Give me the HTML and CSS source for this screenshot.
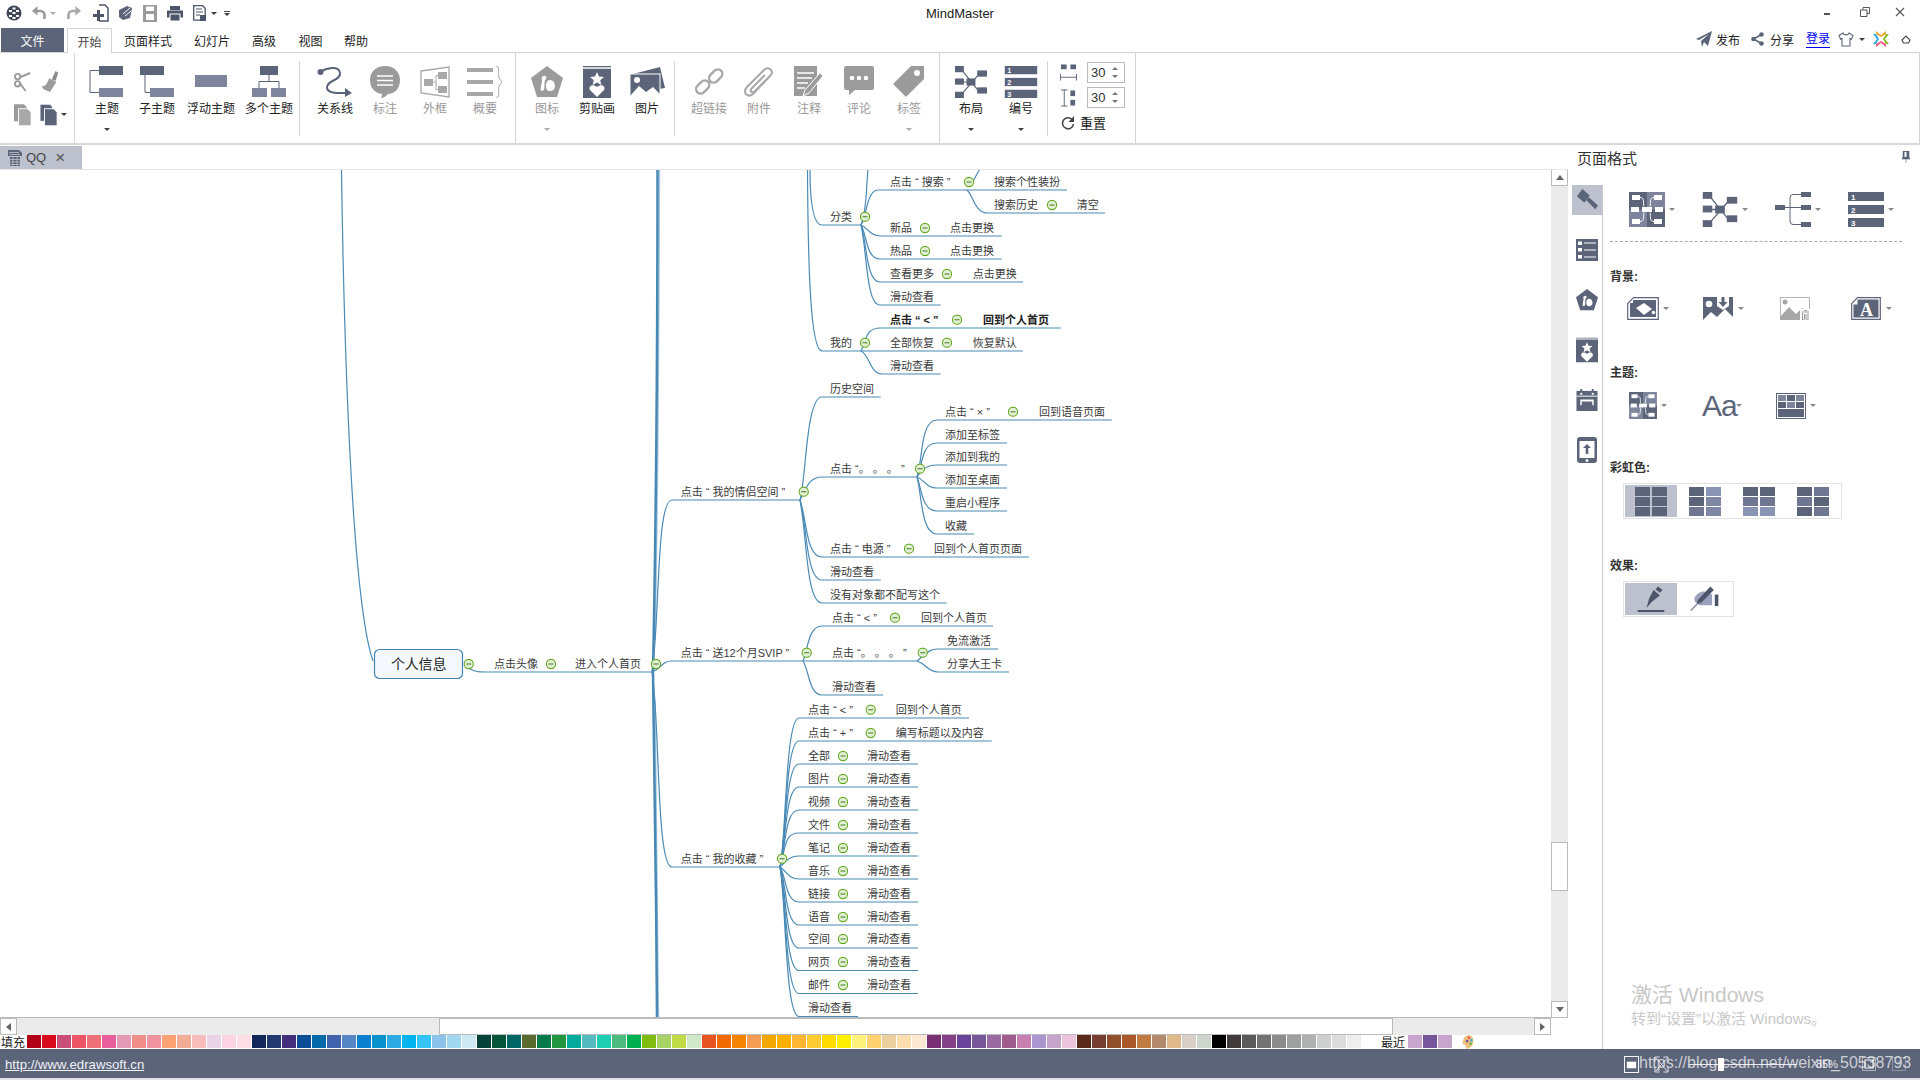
FILE: index.html
```html
<!DOCTYPE html>
<html lang="zh-CN">
<head>
<meta charset="utf-8">
<title>MindMaster</title>
<link rel="stylesheet" href="styles.css">
</head>
<body>
<svg class="defs" width="0" height="0">
  <symbol id="m" viewBox="0 0 11 11"><circle cx="5.5" cy="5.5" r="4.6" fill="#e3eed6" stroke="#62a81c" stroke-width="1.1"/><path d="M3 5.500H8" stroke="#3f7f16" stroke-width="1.1"/></symbol>
  <symbol id="i-clip" viewBox="0 0 28 32"><path d="M0 0H28V32H0Z" fill="#5c6479"/><path d="M0 2H28" stroke="#fff" stroke-width="1.5"/><path d="M14 6l2 4.600 5 .4-3.800 3.200 1.200 4.800-4.400-2.600-4.400 2.600 1.200-4.800L7 11l5-.4Z" fill="#fff"/><path d="M14 31l-7-7c-2-3 2-7 7-3 5-4 9 0 7 3Z" fill="#fff"/></symbol>
  <symbol id="i-penta" viewBox="0 0 32 32"><path d="M16 0L32 12 26 31H6L0 12Z" fill="currentColor"/><path d="M13 10c3-1 3 3 1 4-1 3 0 6-1 10l-3 1c-1-4 1-7 1-11-1-2 0-4 2-4ZM19 14c3 0 5 3 5 6 0 3-2 5-5 5-3 0-4-2-4-5 0-3 1-6 4-6Z" fill="#fff"/></symbol>
  <symbol id="i-layout" viewBox="0 0 36 36"><g fill="#5c6479"><rect x="0" y="0" width="10" height="7"/><rect x="0" y="14" width="10" height="7"/><rect x="0" y="29" width="10" height="7"/><rect x="25" y="5" width="11" height="7"/><rect x="25" y="24" width="11" height="7"/><rect x="13" y="14" width="10" height="8"/></g><path d="M8 5L28 30M8 31L28 8M8 18H16" stroke="#5c6479" stroke-width="1.300" fill="none"/></symbol>
  <symbol id="i-bars" viewBox="0 0 36 35"><g fill="#5c6479"><rect width="36" height="9"/><rect y="13" width="36" height="9"/><rect y="26" width="36" height="9"/></g></symbol>
  <symbol id="i-themap" viewBox="0 0 36 35"><rect width="36" height="35" fill="#7e849c"/><path d="M0 0H18V17.500H36V35H18V17.500H0Z" fill="#5c6479"/><g fill="#fff"><rect x="3" y="3" width="8" height="5"/><rect x="25" y="3" width="8" height="5"/><rect x="2" y="15" width="8" height="5"/><rect x="26" y="15" width="8" height="5"/><rect x="3" y="27" width="8" height="5"/><rect x="25" y="27" width="8" height="5"/><rect x="13" y="15" width="10" height="5"/></g><path d="M11 5.500c5 0 3 6 4 9M25 5.500c-5 0-3 6-4 9M11 29.500c5 0 3-6 4-9M25 29.500c-5 0-3-6-4-9" stroke="#fff" fill="none"/></symbol>
  <symbol id="i-pen" viewBox="0 0 36 30"><path d="M26 1l5 4-3 3-5-4ZM21 5l7 6-9 7-6 7 3-11Z" fill="#4d556b"/><path d="M3 28.500H33" stroke="#4d556b" stroke-width="2"/></symbol>
</svg>

<div class="app">
  <header class="titlebar">
    <div class="qa">
      <svg class="q q-logo" viewBox="0 0 16 16"><circle cx="8" cy="8" r="7.500" fill="#3f4658"/><path d="M3 5h3v2H3zM10 5h3v2h-3zM6.500 2.500h3v2h-3zM6.500 7h3v2h-3zM3 10h3v2H3zM10 10h3v2h-3zM6.500 12h3v2h-3z" fill="#fff"/></svg>
      <svg class="q q-undo" viewBox="0 0 14 14"><path d="M4 5H8.500A4 4 0 0 1 12.500 9V13" fill="none" stroke="#9b9b9b" stroke-width="2.600"/><path d="M5.500 0V9.500L0 5Z" fill="#9b9b9b"/></svg>
      <i class="caret c-light q-c1"></i>
      <svg class="q q-redo" viewBox="0 0 14 14"><path d="M10 5H5.500A4 4 0 0 0 1.500 9V13" fill="none" stroke="#a8a8a8" stroke-width="2.600"/><path d="M8.500 0V9.500L14 5Z" fill="#a8a8a8"/></svg>
      <svg class="q q-new" viewBox="0 0 16 18"><path d="M6 1h6l3 3v13H6" fill="none" stroke="#4d556b" stroke-width="1.500"/><path d="M0 10h4V6h3v4h4v3H7v4H4v-4H0Z" fill="#4d556b"/></svg>
      <svg class="q q-open" viewBox="0 0 16 16"><path d="M1 5l8-4 5 2-2 10-7 2-4-3Z" fill="#5c6479"/><path d="M5 9l7-6M7 11l6-5" stroke="#fff"/></svg>
      <svg class="q q-save" viewBox="0 0 14 17"><rect width="14" height="17" fill="#9b9b9b"/><rect x="3" y="1.500" width="8" height="4.500" fill="#fff"/><rect x="3" y="9" width="8" height="6" fill="#fff"/></svg>
      <svg class="q q-print" viewBox="0 0 16 15"><rect x="3" y="0" width="10" height="4" fill="#4d556b"/><rect y="4.500" width="16" height="7" fill="#4d556b"/><rect x="3" y="8" width="10" height="7" fill="#4d556b" stroke="#fff"/></svg>
      <svg class="q q-page" viewBox="0 0 13 16"><path d="M.7.700h9l2.500 2.500v12H.7Z" fill="none" stroke="#4d556b" stroke-width="1.300"/><path d="M3 4h6M3 7h7M3 10h4" stroke="#4d556b"/><rect x="7" y="10" width="6" height="6" fill="#4d556b"/></svg>
      <i class="caret q-c2"></i>
      <span class="q-more"><i class="bar"></i><i class="caret"></i></span>
    </div>
    <div class="apptitle">MindMaster</div>
    <div class="winctl">
      <span class="wc-min"></span>
      <svg class="wc-res" viewBox="0 0 10 10"><path d="M3 2.500V.5H9.500V6.500H7M.5 3H7V9.500H.5Z" fill="none" stroke="#555"/></svg>
      <svg class="wc-cl" viewBox="0 0 10 10"><path d="M1 1L9 9M9 1L1 9" stroke="#555" stroke-width="1.100"/></svg>
    </div>
  </header>

  <nav class="tabs">
    <div class="tab tab-file">文件</div>
    <div class="tab tab-active">开始</div>
    <div class="tab w72">页面样式</div>
    <div class="tab w56">幻灯片</div>
    <div class="tab w48">高级</div>
    <div class="tab w45">视图</div>
    <div class="tab w46">帮助</div>
    <div class="topright">
      <svg class="tr-send" viewBox="0 0 16 16"><path d="M0 8L16 0 12 15 8 11 6 16 5 10 13 3 3 9Z" fill="#5c6479"/></svg>
      <span class="tr-t1">发布</span>
      <svg class="tr-share" viewBox="0 0 13 14"><path d="M10.500 2.500L2.500 7l8 4.500" fill="none" stroke="#5c6479" stroke-width="1.500"/><circle cx="10.500" cy="2.500" r="2.300" fill="#5c6479"/><circle cx="2.500" cy="7" r="2.300" fill="#5c6479"/><circle cx="10.500" cy="11.500" r="2.300" fill="#5c6479"/></svg>
      <span class="tr-t2">分享</span>
      <span class="tr-login">登录</span>
      <svg class="tr-shirt" viewBox="0 0 16 15"><path d="M5 1L1 3.500 2.500 7 4 6.500V14H12V6.500L13.500 7 15 3.500 11 1C10 3.500 6 3.500 5 1Z" fill="none" stroke="#5c6479" stroke-width="1.100"/></svg>
      <i class="caret tr-caret"></i>
      <svg class="tr-logo" viewBox="0 0 16 16"><path d="M0 3l4 5-4 5h3l3-5-3-5Z" fill="#35a9e0"/><path d="M13 0L8 4 3 0v3l5 3 5-3Z" fill="#f3a935"/><path d="M16 3l-4 5 4 5h-3l-3-5 3-5Z" fill="#8dbb2c"/><path d="M3 16l5-4 5 4v-3L8 10l-5 3Z" fill="#ef5b7d"/></svg>
      <svg class="tr-up" viewBox="0 0 10 9"><path d="M1 5L5 1 9 5 7.500 8H2.500Z" fill="none" stroke="#444" stroke-width="1.100"/></svg>
    </div>
  </nav>

  <section class="ribbon">
    <div class="grp g-clip">
      <svg class="cb" viewBox="0 0 20 22"><circle cx="4" cy="5" r="3" fill="none" stroke="#9b9b9b" stroke-width="2"/><circle cx="4" cy="13" r="3" fill="none" stroke="#9b9b9b" stroke-width="2"/><path d="M6 6L18 1M6 12L13 21" stroke="#9b9b9b" stroke-width="2.200"/></svg>
      <svg class="cb" viewBox="0 0 18 24"><path d="M11 9L15 0l3 2-3 9Z" fill="#8a8a8a"/><path d="M8 8l8 4-7 11-7-3-2-3c4 0 6-3 8-9Z" fill="#9b9b9b"/></svg>
      <svg class="cb" viewBox="0 0 20 24"><path d="M0 0H11L14 3V19H0Z" fill="#9b9b9b"/><path d="M5 5H15L19 9V24H5Z" fill="#a8a8a8" stroke="#fff"/></svg>
      <span class="paste"><svg class="cb" viewBox="0 0 20 24"><path d="M0 0H11L14 3V19H0Z" fill="#5c6479" stroke="#fff"/><path d="M5 5H15L19 9V24H5Z" fill="#5c6479" stroke="#fff"/></svg><i class="caret"></i></span>
    </div>
    <div class="grp g2">
      <div class="rb w50"><svg class="ri" viewBox="0 0 36 32"><rect x="10" width="24" height="9" fill="#5c6479"/><rect x="10" y="22" width="24" height="9" fill="#7e849c"/><path d="M10 4.500H1V26.500H10" fill="none" stroke="#5c6479"/></svg><span>主题</span><i class="caret"></i></div>
      <div class="rb w50"><svg class="ri" viewBox="0 0 36 32"><rect x="1" width="24" height="9" fill="#5c6479"/><rect x="11" y="22" width="24" height="9" fill="#7e849c"/><path d="M6 9V26.500H11" fill="none" stroke="#5c6479"/></svg><span>子主题</span></div>
      <div class="rb w58"><svg class="ri" viewBox="0 0 36 32"><rect x="2" y="9" width="32" height="12" fill="#7e849c"/></svg><span>浮动主题</span></div>
      <div class="rb w58"><svg class="ri" viewBox="0 0 36 32"><rect x="9" width="18" height="9" fill="#5c6479"/><rect x="1" y="22" width="15" height="9" fill="#7e849c"/><rect x="20" y="22" width="15" height="9" fill="#7e849c"/><path d="M18 9V15.500M8 22V15.500H28V22" fill="none" stroke="#5c6479"/></svg><span>多个主题</span></div>
    </div>
    <div class="sep"></div>
    <div class="grp g3">
      <div class="rb w50"><svg class="ri" viewBox="0 0 36 32"><circle cx="3.500" cy="6" r="3" fill="#5c6479"/><path d="M3 6C9 2 22 -1 23 7C24 15 9 14 10 22C11 28 22 27 31 27" fill="none" stroke="#5c6479" stroke-width="2"/><path d="M28 22L35 27 28 31Z" fill="#5c6479"/></svg><span>关系线</span></div>
      <div class="rb w50 off"><svg class="ri" viewBox="0 0 32 32"><path d="M16 0C25 0 31 6 31 14 31 23 25 28 19 28 17 30 15 32 12 32 13 30 13 29 13 28 6 27 1 22 1 14 1 6 7 0 16 0Z" fill="#9b9b9b"/><path d="M8 10H24M8 14.500H24M8 19H24" stroke="#fff" stroke-width="1.300"/></svg><span>标注</span></div>
      <div class="rb w50 off"><svg class="ri" viewBox="0 0 30 32"><path d="M1 5L29 1V31L1 27Z" fill="none" stroke="#a8a8a8" stroke-width="1.300"/><g fill="#a8a8a8"><rect x="4" y="13" width="9" height="7"/><rect x="18" y="6" width="9" height="7"/><rect x="18" y="20" width="9" height="7"/></g><path d="M13 16H16V9.500H18M16 16V23.500H18" fill="none" stroke="#a8a8a8"/></svg><span>外框</span></div>
      <div class="rb w50 off"><svg class="ri" viewBox="0 0 36 32"><g fill="#a8a8a8"><rect y="2" width="26" height="4"/><rect y="14" width="26" height="4"/><rect y="26" width="26" height="4"/></g><path d="M29 0C33 0 31 6 32 12L35 16 32 20C31 26 33 32 29 32" fill="none" stroke="#a8a8a8"/></svg><span>概要</span></div>
    </div>
    <div class="sep sep-full"></div>
    <div class="grp g4">
      <div class="rb w50 off"><svg class="ri gray" viewBox="0 0 32 32"><use href="#i-penta"/></svg><span>图标</span><i class="caret c-light"></i></div>
      <div class="rb w50"><svg class="ri" viewBox="0 0 28 32"><use href="#i-clip"/></svg><span>剪贴画</span></div>
      <div class="rb w50"><svg class="ri" viewBox="0 0 36 32"><path d="M4 8L31 1 36 22 30 23V9H4Z" fill="#5c6479"/><rect x="1" y="8" width="30" height="23" fill="#5c6479" stroke="#fff"/><circle cx="8" cy="14" r="3" fill="#fff"/><path d="M1 30L10 20 17 26 24 21 31 28V31H1Z" fill="#fff"/></svg><span>图片</span></div>
    </div>
    <div class="sep"></div>
    <div class="grp g5">
      <div class="rb w50 off"><svg class="ri" viewBox="0 0 32 32"><g fill="none" stroke="#a8a8a8" stroke-width="2.400"><rect x="2" y="17" width="15" height="9" rx="4.500" transform="rotate(-45 9 21)"/><rect x="15" y="6" width="15" height="9" rx="4.500" transform="rotate(-45 22 10)"/></g></svg><span>超链接</span></div>
      <div class="rb w50 off"><svg class="ri" viewBox="0 0 32 32"><path d="M27 10L10 28C5 32-1 27 4 21L21 4C25 0 31 4 28 9L12 25C9 28 6 25 9 22L22 9" fill="none" stroke="#a8a8a8" stroke-width="2"/></svg><span>附件</span></div>
      <div class="rb w50 off"><svg class="ri" viewBox="0 0 30 32"><rect width="23" height="30" y="0" fill="#9b9b9b"/><path d="M3 7H20M3 12H18M3 17H14M3 22H11" stroke="#fff" stroke-width="1.500"/><path d="M26 7L29 10 15 27 9 30 11 24Z" fill="#9b9b9b" stroke="#fff"/></svg><span>注释</span></div>
      <div class="rb w50 off"><svg class="ri" viewBox="0 0 30 32"><path d="M2 0H28Q30 0 30 2V22Q30 24 28 24H11L5 29V24H2Q0 24 0 22V2Q0 0 2 0Z" fill="#9b9b9b"/><circle cx="8" cy="12" r="2.300" fill="#fff"/><circle cx="15" cy="12" r="2.300" fill="#fff"/><circle cx="22" cy="12" r="2.300" fill="#fff"/></svg><span>评论</span></div>
      <div class="rb w50 off"><svg class="ri" viewBox="0 0 32 32"><path d="M18 0H31V13L13 31 0 18Z" fill="#9b9b9b"/><circle cx="24" cy="7" r="3" fill="#fff"/></svg><span>标签</span><i class="caret c-light"></i></div>
    </div>
    <div class="sep sep-full"></div>
    <div class="grp g6">
      <div class="rb w50"><svg class="ri" viewBox="0 0 36 36"><use href="#i-layout"/></svg><span>布局</span><i class="caret"></i></div>
      <div class="rb w50"><svg class="ri" viewBox="0 0 36 35"><use href="#i-bars"/><g class="numtxt"><text x="3" y="8">1</text><text x="3" y="21">2</text><text x="3" y="34">3</text></g></svg><span>编号</span><i class="caret"></i></div>
    </div>
    <div class="sep"></div>
    <div class="grp g7">
      <div class="spinrow"><svg class="sp" viewBox="0 0 18 18"><rect x="1" y="0" width="6" height="5" fill="#5c6479"/><rect x="11" y="0" width="6" height="5" fill="#5c6479"/><path d="M.5 10V17M17.500 10V17M.5 13.500H17.500" stroke="#5c6479" fill="none"/></svg><div class="spin"><b>30</b><span class="arr"><i class="up"></i><i class="dn"></i></span></div></div>
      <div class="spinrow"><svg class="sp" viewBox="0 0 18 18"><rect x="11" y="1" width="5" height="6" fill="#5c6479"/><rect x="11" y="11" width="5" height="6" fill="#5c6479"/><path d="M1 .5H8M1 17.500H8M4.500 .5V17.500" stroke="#5c6479" fill="none"/></svg><div class="spin"><b>30</b><span class="arr"><i class="up"></i><i class="dn"></i></span></div></div>
      <div class="reset"><svg class="rst" viewBox="0 0 14 14"><path d="M11.500 4A5.500 5.500 0 1 0 12.500 8" fill="none" stroke="#444" stroke-width="1.500"/><path d="M13 0V6H7.500Z" fill="#444"/></svg><span>重置</span></div>
    </div>
    <div class="sep sep-full"></div>
  </section>

  <main class="main">
    <div class="left">
      <div class="doctabs">
        <div class="doctab">
          <svg class="docico" viewBox="0 0 16 18"><path d="M1 1H12L15 4V7H1Z" fill="#5c6479"/><rect x="3" y="8" width="10" height="9" fill="#5c6479"/><path d="M2 3.500H12M3 5.500H13M3 10.500H13M3 13H13M3 15.500H13M6 8V17M10 8V17" stroke="#bcc1cd" stroke-width=".8"/></svg>
          <span class="docname">QQ</span>
          <span class="docx">×</span>
        </div>
      </div>
      <div class="work">
        <div class="canvas">
          <svg class="map" width="1551" height="849" viewBox="0 169 1551 849">
            <g class="ln2">
              <path d="M659.500 169C659 300 658 500 655 640M655 700C657 800 658 900 658.500 1018"/>
            </g>
            <g class="ln3">
              <path d="M657.500 169C657.500 300 656.500 500 653 672"/>
              <path d="M653 672C654 760 656.500 900 657 1018"/>
            </g>
            <g class="ln">
              <path d="M341.500 169C344 350 352 600 373 661"/>
              <path d="M468 668C476 672 478 672 485 672H652"/>
              <path d="M652 672C660 620 656 500 672 500H800"/>
              <path d="M652 672C662 668 662 661 672 661H917"/>
              <path d="M652 672C660 720 656 867 672 867H780"/>

              <path d="M810 169C810 195 812 225 822 225H861"/>
              <path d="M807.500 169C808 260 810 351 822 351H1023"/>
              <path d="M861 225C867 210 866 190 868 169"/>
              <path d="M861 225C867 215 867 190 878 190H1067"/>
              <path d="M861 225C868 228 870 236 880 236H1001.700"/>
              <path d="M861 225C867 235 866 259 880 259H1001.700"/>
              <path d="M861 225C867 242 866 282 880 282H1023"/>
              <path d="M861 225C867 250 866 305 880 305H940.700"/>
              <path d="M970 187C974 180 976 175 980 169"/>
              <path d="M967 190C973 195 975 213 987 213H1105"/>
              <path d="M861 351C866 340 866 328 880 328H1060.700"/>
              <path d="M861 351C870 355 870 374 882 374H940.700"/>

              <path d="M800 500C806 480 806 397 822 397H880.700"/>
              <path d="M800 500C806 490 808 477 822 477H917"/>
              <path d="M800 500C807 520 806 557 822 557H1029"/>
              <path d="M800 500C807 525 806 580 822 580H880.700"/>
              <path d="M800 500C807 535 806 603 822 603H946.700"/>

              <path d="M917 477C923 460 920 420 937 420H1111.700"/>
              <path d="M917 477C923 465 921 443 937 443H1007"/>
              <path d="M917 477C922 470 926 465 937 465H1007"/>
              <path d="M917 477C925 480 926 488 937 488H1007"/>
              <path d="M917 477C922 490 922 511 937 511H1007"/>
              <path d="M917 477C922 495 921 534 937 534H974"/>

              <path d="M803 661C808 650 808 626 822 626H993"/>
              <path d="M803 661C809 670 809 695 822 695H883"/>
              <path d="M917 661C925 655 928 649 938 649H998"/>
              <path d="M917 661C925 663 928 672 938 672H1009"/>

              <path d="M780 867C786 845 785 718 799 718H969"/>
              <path d="M780 867C786 845 785 741 799 741H991.700"/>
              <path d="M780 867C786 845 785 764 799 764H918"/>
              <path d="M780 867C786 845 785 787 799 787H918"/>
              <path d="M780 867C786 845 785 810 799 810H918"/>
              <path d="M780 867C786 845 785 833 799 833H918"/>
              <path d="M780 867C786 862 788 856 799 856H918"/>
              <path d="M780 867C786 870 788 879 799 879H918"/>
              <path d="M780 867C786 875 785 902 799 902H918"/>
              <path d="M780 867C786 880 785 925 799 925H918"/>
              <path d="M780 867C786 885 785 948 799 948H918"/>
              <path d="M780 867C786 890 785 970.500 799 970.500H918"/>
              <path d="M780 867C786 895 785 993.500 799 993.500H918"/>
              <path d="M780 867C786 900 785 1016.500 799 1016.500H858"/>
            </g>

            <rect class="root" x="374.500" y="649.500" width="88" height="29" rx="5"/>
            <text class="roottxt" x="391" y="669">个人信息</text>

            <g class="t">
              <text x="494" y="667">点击头像</text><text x="575" y="667">进入个人首页</text>
              <text x="830" y="220">分类</text><text x="830" y="346">我的</text>
              <text x="890" y="185">点击 “ 搜索 ”</text><text x="994" y="185">搜索个性装扮</text>
              <text x="994" y="208">搜索历史</text><text x="1076.700" y="208">清空</text>
              <text x="890" y="231">新品</text><text x="950" y="231">点击更换</text>
              <text x="890" y="254">热品</text><text x="950" y="254">点击更换</text>
              <text x="890" y="277">查看更多</text><text x="972.700" y="277">点击更换</text>
              <text x="890" y="300">滑动查看</text>
              <text class="bold" x="890" y="323">点击 “ &lt; ”</text><text class="bold" x="983" y="323">回到个人首页</text>
              <text x="890" y="346">全部恢复</text><text x="972.700" y="346">恢复默认</text>
              <text x="890" y="369">滑动查看</text>
              <text x="830" y="392">历史空间</text>
              <text x="945" y="415">点击 “ × ”</text><text x="1039" y="415">回到语音页面</text>
              <text x="945" y="438">添加至标签</text><text x="945" y="460">添加到我的</text>
              <text x="945" y="483">添加至桌面</text><text x="945" y="506">重启小程序</text>
              <text x="945" y="529">收藏</text>
              <text x="830" y="472">点击 “。 。 。 ”</text>
              <text x="680.700" y="495">点击 “ 我的情侣空间 ”</text>
              <text x="830" y="552">点击 “ 电源 ”</text><text x="934" y="552">回到个人首页页面</text>
              <text x="830" y="575">滑动查看</text><text x="830" y="598">没有对象都不配写这个</text>
              <text x="832" y="621">点击 “ &lt; ”</text><text x="921" y="621">回到个人首页</text>
              <text x="832" y="656">点击 “。 。 。 ”</text>
              <text x="947" y="644">免流激活</text><text x="947" y="667">分享大王卡</text>
              <text x="832" y="690">滑动查看</text>
              <text x="680.700" y="656">点击 “ 送12个月SVIP ”</text>
              <text x="808" y="713">点击 “ &lt; ”</text><text x="895.700" y="713">回到个人首页</text>
              <text x="808" y="736">点击 “ + ”</text><text x="895.700" y="736">编写标题以及内容</text>
              <text x="680.700" y="862">点击 “ 我的收藏 ”</text>
              <text x="808" y="759">全部</text><text x="867" y="759">滑动查看</text>
              <text x="808" y="782">图片</text><text x="867" y="782">滑动查看</text>
              <text x="808" y="805">视频</text><text x="867" y="805">滑动查看</text>
              <text x="808" y="828">文件</text><text x="867" y="828">滑动查看</text>
              <text x="808" y="851">笔记</text><text x="867" y="851">滑动查看</text>
              <text x="808" y="874">音乐</text><text x="867" y="874">滑动查看</text>
              <text x="808" y="897">链接</text><text x="867" y="897">滑动查看</text>
              <text x="808" y="920">语音</text><text x="867" y="920">滑动查看</text>
              <text x="808" y="942">空间</text><text x="867" y="942">滑动查看</text>
              <text x="808" y="965">网页</text><text x="867" y="965">滑动查看</text>
              <text x="808" y="988">邮件</text><text x="867" y="988">滑动查看</text>
              <text x="808" y="1011">滑动查看</text>
            </g>

            <g class="mm">
              <use href="#m" x="463.200" y="658.500" width="11" height="11"/>
              <use href="#m" x="545.500" y="658.500" width="11" height="11"/>
              <use href="#m" x="650.500" y="658.500" width="11" height="11"/>
              <use href="#m" x="963.500" y="176.500" width="11" height="11"/>
              <use href="#m" x="1046.500" y="199.500" width="11" height="11"/>
              <use href="#m" x="919.500" y="222.500" width="11" height="11"/>
              <use href="#m" x="919.500" y="245.500" width="11" height="11"/>
              <use href="#m" x="941.500" y="268.500" width="11" height="11"/>
              <use href="#m" x="859.500" y="211.200" width="11" height="11"/>
              <use href="#m" x="951.500" y="314.200" width="11" height="11"/>
              <use href="#m" x="941.500" y="337.200" width="11" height="11"/>
              <use href="#m" x="859.500" y="337.200" width="11" height="11"/>
              <use href="#m" x="1007.500" y="406.200" width="11" height="11"/>
              <use href="#m" x="914.500" y="463.200" width="11" height="11"/>
              <use href="#m" x="798.200" y="486.200" width="11" height="11"/>
              <use href="#m" x="903.500" y="543.200" width="11" height="11"/>
              <use href="#m" x="889.500" y="612.200" width="11" height="11"/>
              <use href="#m" x="801.200" y="647.200" width="11" height="11"/>
              <use href="#m" x="917.200" y="647.200" width="11" height="11"/>
              <use href="#m" x="865.200" y="704.200" width="11" height="11"/>
              <use href="#m" x="865.200" y="727.500" width="11" height="11"/>
              <use href="#m" x="776.500" y="853.200" width="11" height="11"/>
              <use href="#m" x="837.500" y="750.500" width="11" height="11"/>
              <use href="#m" x="837.500" y="773.500" width="11" height="11"/>
              <use href="#m" x="837.500" y="796.500" width="11" height="11"/>
              <use href="#m" x="837.500" y="819.500" width="11" height="11"/>
              <use href="#m" x="837.500" y="842.500" width="11" height="11"/>
              <use href="#m" x="837.500" y="865.500" width="11" height="11"/>
              <use href="#m" x="837.500" y="888.500" width="11" height="11"/>
              <use href="#m" x="837.500" y="911.500" width="11" height="11"/>
              <use href="#m" x="837.500" y="933.500" width="11" height="11"/>
              <use href="#m" x="837.500" y="956.500" width="11" height="11"/>
              <use href="#m" x="837.500" y="979.500" width="11" height="11"/>
            </g>
          </svg>
        </div>
        <div class="vscroll">
          <div class="sbtn"><i class="tri tri-up"></i></div>
          <div class="vgap1"></div>
          <div class="vthumb"></div>
          <div class="vgap2"></div>
          <div class="sbtn"><i class="tri tri-dn"></i></div>
        </div>
      </div>
      <div class="hscroll">
        <div class="sbtn"><i class="tri tri-l"></i></div>
        <div class="hgap1"></div>
        <div class="hthumb"></div>
        <div class="hgap2"></div>
        <div class="sbtn"><i class="tri tri-r"></i></div>
      </div>
      <div class="colors">
        <span class="cl-label">填充</span>
        <div class="swatches">
          <i class="s1"></i><i class="s2"></i><i class="s3"></i><i class="s4"></i><i class="s5"></i><i class="s6"></i><i class="s7"></i><i class="s8"></i><i class="s9"></i><i class="s10"></i><i class="s11"></i><i class="s12"></i><i class="s13"></i><i class="s14"></i><i class="s15"></i>
          <i class="s16"></i><i class="s17"></i><i class="s18"></i><i class="s19"></i><i class="s20"></i><i class="s21"></i><i class="s22"></i><i class="s23"></i><i class="s24"></i><i class="s25"></i><i class="s26"></i><i class="s27"></i><i class="s28"></i><i class="s29"></i><i class="s30"></i>
          <i class="s31"></i><i class="s32"></i><i class="s33"></i><i class="s34"></i><i class="s35"></i><i class="s36"></i><i class="s37"></i><i class="s38"></i><i class="s39"></i><i class="s40"></i><i class="s41"></i><i class="s42"></i><i class="s43"></i><i class="s44"></i><i class="s45"></i>
          <i class="s46"></i><i class="s47"></i><i class="s48"></i><i class="s49"></i><i class="s50"></i><i class="s51"></i><i class="s52"></i><i class="s53"></i><i class="s54"></i><i class="s55"></i><i class="s56"></i><i class="s57"></i><i class="s58"></i><i class="s59"></i><i class="s60"></i>
          <i class="s61"></i><i class="s62"></i><i class="s63"></i><i class="s64"></i><i class="s65"></i><i class="s66"></i><i class="s67"></i><i class="s68"></i><i class="s69"></i><i class="s70"></i>
          <i class="s71"></i><i class="s72"></i><i class="s73"></i><i class="s74"></i><i class="s75"></i><i class="s76"></i><i class="s77"></i><i class="s78"></i><i class="s79"></i>
          <i class="s80"></i><i class="s81"></i><i class="s82"></i><i class="s83"></i><i class="s84"></i><i class="s85"></i><i class="s86"></i><i class="s87"></i><i class="s88"></i><i class="s89"></i><i class="s90"></i>
        </div>
        <span class="cl-recent">最近</span>
        <div class="recent"><i class="r1"></i><i class="r2"></i><i class="r1"></i></div>
        <svg class="palette" viewBox="0 0 14 16"><path d="M8 0C12 0 14 4 13 9 12 14 8 16 5 16 4 14 5 12 3 11 1 11 0 10 1 7 2 3 4 0 8 0Z" fill="#eec07c"/><circle cx="8" cy="3" r="1.500" fill="#e2564d"/><circle cx="11" cy="6" r="1.500" fill="#3ea7d9"/><circle cx="10" cy="10" r="1.500" fill="#5cb04a"/><circle cx="6" cy="7" r="1.500" fill="#7a57a3"/></svg>
      </div>
    </div>

    <aside class="panel">
      <div class="p-head"><span>页面格式</span><svg class="pin" viewBox="0 0 8 12"><path d="M1 0H7V7H1ZM0 7H8V8H0ZM4 8V12" fill="#5c6479" stroke="#5c6479" stroke-width=".6"/><rect x="2.500" y="1" width="2" height="5" fill="#fff"/></svg></div>
      <div class="p-body">
        <div class="strip">
          <div class="st st-on"><svg class="sti" viewBox="0 0 24 24"><path d="M1 8L7 0 15 7 9 15Z" fill="#5c6479"/><path d="M11 12L14 9 24 18 21 22Z" fill="#5c6479"/></svg></div>
          <div class="st"><svg class="sti" viewBox="0 0 22 22"><rect width="22" height="22" fill="#5c6479"/><path d="M2 2.500h4v3.500H2zM2 9h4v3.500H2zM2 16h4v3.500H2z" fill="#fff"/><path d="M8 4H20M8 11H20M8 18H20" stroke="#fff"/></svg></div>
          <div class="st"><svg class="sti" viewBox="0 0 24 24"><use href="#i-penta" class="dark"/></svg></div>
          <div class="st"><svg class="sti tall" viewBox="0 0 28 32"><use href="#i-clip"/></svg></div>
          <div class="st"><svg class="sti" viewBox="0 0 22 23"><rect y="2" width="22" height="21" fill="#5c6479"/><path d="M5 0V3M17 0V3" stroke="#5c6479" stroke-width="2"/><circle cx="5" cy="5" r="1.200" fill="#fff"/><circle cx="17" cy="5" r="1.200" fill="#fff"/><path d="M0 7.500H22" stroke="#fff"/><path d="M4 11H18V17H16.500V13H5.500V17H4Z" fill="#fff"/></svg></div>
          <div class="st"><svg class="sti tall" viewBox="0 0 20 26"><rect width="20" height="26" rx="3" fill="#5c6479"/><rect x="2.500" y="4" width="15" height="17" fill="#fff"/><circle cx="10" cy="23.500" r="1.500" fill="#fff"/><path d="M10 7L14 11H11.300V17H8.700V11H6Z" fill="#5c6479"/></svg></div>
        </div>
        <div class="pf">
          <div class="row r1col">
            <div class="pi"><svg class="i36" viewBox="0 0 36 35"><use href="#i-themap"/></svg><i class="caret c-mid"></i></div>
            <div class="pi"><svg class="i36" viewBox="0 0 36 36"><use href="#i-layout"/></svg><i class="caret c-mid"></i></div>
            <div class="pi"><svg class="i36" viewBox="0 0 36 35"><g fill="#5c6479"><rect y="13" width="10" height="5"/><rect x="26" width="10" height="5"/><rect x="26" y="13" width="10" height="5"/><rect x="26" y="30" width="10" height="5"/></g><path d="M10 15.500H26M26 2.500H18Q15 2.500 15 6V29Q15 32.500 18 32.500H26" fill="none" stroke="#5c6479"/></svg><i class="caret c-mid"></i></div>
            <div class="pi"><svg class="i36" viewBox="0 0 36 35"><use href="#i-bars"/><g class="numtxt"><text x="3" y="8">1</text><text x="3" y="21">2</text><text x="3" y="34">3</text></g></svg><i class="caret c-mid"></i></div>
          </div>
          <div class="dash"></div>
          <div class="lbl l-bg">背景:</div>
          <div class="row r2col">
            <div class="pi"><svg class="i2" viewBox="0 0 32 23"><path d="M6.500 .7L.7 6.500V22.300H31.300V.7Z" fill="#fff" stroke="#5c6479" stroke-width="1.200"/><path d="M6 3H29V20H3V6H6Z" fill="#5c6479"/><path d="M9 11L17 6 25 12 17 18Z" fill="#fff"/><circle cx="26.500" cy="15.500" r="1.800" fill="#fff"/></svg><i class="caret c-mid"></i></div>
            <div class="pi"><svg class="i2" viewBox="0 0 30 23"><path d="M0 0H30V23H0Z" fill="#5c6479"/><circle cx="6" cy="7" r="3.300" fill="#fff"/><path d="M0 23L8 15 14 20 22 12 30 20V23Z" fill="#fff"/><path d="M14 0H26V9L20 13 14 9Z" fill="#fff"/><path d="M18.500 0H21.500V5H24.500L20 10 15.500 5H18.500Z" fill="#5c6479"/></svg><i class="caret c-mid"></i></div>
            <div class="pi"><svg class="i2" viewBox="0 0 30 23"><rect x=".5" y=".5" width="29" height="22" fill="none" stroke="#b5b5b5"/><circle cx="5" cy="5" r="2.500" fill="#a8a8a8"/><path d="M0 23V20L9 10 16 17 22 11 30 17V23Z" fill="#a8a8a8"/><rect x="20" y="12" width="10" height="11" fill="#fff"/><path d="M21.500 15H29M22.500 16V23H28V16M24.500 17V22M26 17V22M24 13.500H27" fill="none" stroke="#9b9b9b"/></svg></div>
            <div class="pi"><svg class="i2" viewBox="0 0 30 23"><path d="M6.500 .7L.7 6.500V22.300H29.300V.7Z" fill="#fff" stroke="#5c6479" stroke-width="1.200"/><path d="M6.500 2.500H27.500V20.500H2.500V7.500H6.500Z" fill="#5c6479"/><text class="bigA" x="9" y="19">A</text></svg><i class="caret c-mid"></i></div>
          </div>
          <div class="lbl l-zt">主题:</div>
          <div class="row r3col">
            <div class="pi"><svg class="i3" viewBox="0 0 36 35"><use href="#i-themap"/></svg><i class="caret c-mid"></i></div>
            <div class="pi"><span class="aa">Aa</span><i class="caret c-mid"></i></div>
            <div class="pi"><svg class="i3b" viewBox="0 0 30 26"><rect x=".5" y=".5" width="29" height="25" fill="none" stroke="#5c6479"/><g fill="#7e849c"><rect x="2" y="2" width="8" height="6"/><rect x="11" y="2" width="8" height="6" fill="#5c6479"/><rect x="20" y="2" width="8" height="6"/><rect x="2" y="9" width="8" height="6" fill="#5c6479"/><rect x="11" y="9" width="8" height="6"/><rect x="20" y="9" width="8" height="6" fill="#5c6479"/></g><rect x="2" y="16" width="26" height="8" fill="#5c6479"/></svg><i class="caret c-mid"></i></div>
          </div>
          <div class="lbl l-rb">彩虹色:</div>
          <div class="optbox ob-rb">
            <div class="opt opt-on"><div class="cells"><i class="c-d"></i><i class="c-d"></i><i class="c-d"></i><i class="c-d"></i><i class="c-d"></i><i class="c-d"></i></div></div>
            <div class="opt"><div class="cells"><i class="c-d"></i><i class="c-l"></i><i class="c-d"></i><i class="c-m2"></i><i class="c-m"></i><i class="c-m2"></i></div></div>
            <div class="opt"><div class="cells"><i class="c-d"></i><i class="c-d"></i><i class="c-m"></i><i class="c-m"></i><i class="c-l"></i><i class="c-l"></i></div></div>
            <div class="opt"><div class="cells"><i class="c-d"></i><i class="c-m"></i><i class="c-m"></i><i class="c-d"></i><i class="c-d"></i><i class="c-m"></i></div></div>
          </div>
          <div class="lbl l-xg">效果:</div>
          <div class="optbox ob-xg">
            <div class="opt opt-on"><svg class="fx" viewBox="0 0 36 30"><use href="#i-pen"/></svg></div>
            <div class="opt"><svg class="fx" viewBox="0 0 36 30"><path d="M6 14C10 6 18 4 26 10V22H14C8 22 6 18 6 14Z" fill="#99a1bd"/><path d="M24 1l4 4-14 14-5 2 1-5Z" fill="#4d556b"/><path d="M2 28L9 21" stroke="#7e849c" stroke-width="1.500"/><rect x="29" y="10" width="4" height="13" fill="#4d556b"/></svg></div>
          </div>
        </div>
      </div>
      <div class="winmark">
        <div class="wm1">激活 Windows</div>
        <div class="wm2">转到“设置”以激活 Windows。</div>
      </div>
    </aside>
  </main>

  <footer class="status">
    <a class="link">http://www.edrawsoft.cn</a>
    <div class="st-right">
      <svg class="si" viewBox="0 0 16 18"><rect x=".5" y=".5" width="15" height="17" fill="none" stroke="#fff"/><rect x="3" y="6" width="10" height="7" fill="#fff"/></svg>
      <svg class="si si2" viewBox="0 0 16 18"><path d="M1 1H6M1 1V6M15 1H10M15 1V6M1 17H6M1 17V12M15 17H10M15 17V12M2 2L14 16M14 2L2 16" fill="none" stroke="#e6e8ee"/></svg>
      <div class="slider"><i class="thumb"></i></div>
      <span class="pct">85%</span>
      <svg class="si si3" viewBox="0 0 14 14"><rect x="3" y="3" width="8" height="8" fill="none" stroke="#fff"/><rect x=".5" y=".5" width="13" height="13" fill="none" stroke="#fff" stroke-dasharray="1 1"/></svg>
      <svg class="si si4" viewBox="0 0 14 14"><rect x=".5" y=".5" width="13" height="13" fill="none" stroke="#8b92a6"/><path d="M7 3V9M4 6H10" stroke="#8b92a6"/></svg>
    </div>
    <div class="csdn">https://blog.csdn.net/weixin_50538793</div>
  </footer>
  <div class="under"></div>
</div>
</body>
</html>
```
FILE: styles.css
```css
* { box-sizing: border-box; }
html, body { margin: 0; padding: 0; }
body { width: 1920px; height: 1080px; overflow: hidden; background: #fff; color: #333; font-family: "Liberation Sans", "Noto Sans CJK SC", sans-serif; font-size: 12px; text-spacing-trim: space-all; }
.defs { position: absolute; }
.app { display: flex; flex-direction: column; width: 1920px; height: 1080px; }

i { display: block; font-style: normal; }
.caret { width: 0; height: 0; border-left: 3px solid transparent; border-right: 3px solid transparent; border-top: 3px solid #3e3e3e; }
.c-light { border-top-color: #aaa; }
.c-mid { border-top-color: #888; }

/* title bar */
.titlebar { position: relative; flex: none; height: 28px; display: flex; align-items: center; justify-content: center; padding-bottom: 2px; }
.apptitle { font-size: 13px; color: #222; }
.qa { position: absolute; left: 0; top: 0; height: 26px; display: flex; align-items: center; }
.q { display: block; }
.q-logo { width: 16px; height: 16px; margin-left: 6px; }
.q-undo { width: 14px; height: 14px; margin-left: 10px; }
.q-c1 { margin-left: 4px; }
.q-redo { width: 14px; height: 14px; margin-left: 11px; }
.q-new { width: 16px; height: 18px; margin-left: 12px; }
.q-open { width: 16px; height: 16px; margin-left: 9px; }
.q-save { width: 14px; height: 17px; margin-left: 9px; }
.q-print { width: 16px; height: 15px; margin-left: 10px; }
.q-page { width: 13px; height: 16px; margin-left: 10px; }
.q-c2 { margin-left: 5px; }
.q-more { display: flex; flex-direction: column; gap: 1px; margin-left: 7px; }
.q-more .bar { width: 6px; height: 1px; background: #444; }
.winctl { position: absolute; right: 4px; top: 0; height: 24px; width: 100px; display: flex; align-items: center; }
.wc-min { width: 6px; height: 2px; background: #555; margin: 4px 0 0 8px; }
.wc-res { width: 10px; height: 10px; margin-left: 30px; }
.wc-cl { width: 10px; height: 10px; margin-left: 25px; }

/* tabs */
.tabs { flex: none; height: 24px; display: flex; align-items: stretch; padding-left: 1px; color: #222; position: relative; z-index: 1; }
.tab { display: flex; align-items: center; justify-content: center; font-size: 12px; }
.tab-file { width: 63px; background: #5c6479; color: #fff; margin-right: 3px; }
.tab-active { width: 45px; height: 25px; background: #fff; border: 1px solid #d4d4d4; border-bottom: 0; color: #444; }
.w72 { width: 72px; } .w56 { width: 56px; } .w48 { width: 48px; } .w45 { width: 45px; } .w46 { width: 46px; }
.topright { margin-left: auto; display: flex; align-items: center; height: 22px; }
.tr-send { width: 16px; height: 16px; }
.tr-t1 { margin-left: 4px; width: 24px; }
.tr-share { width: 13px; height: 14px; margin-left: 11px; }
.tr-t2 { margin-left: 6px; width: 24px; }
.tr-login { margin: 2px 0 0 12px; width: 24px; color: #0000f0; border-bottom: 1px solid #0000f0; line-height: 15px; }
.tr-shirt { width: 16px; height: 15px; margin-left: 8px; }
.tr-caret { margin-left: 5px; }
.tr-logo { width: 16px; height: 16px; margin-left: 8px; }
.tr-up { width: 10px; height: 9px; margin: 0 9px 0 12px; }

/* ribbon */
.ribbon { flex: none; height: 93px; display: flex; border-top: 1px solid #d4d4d4; border-bottom: 2px solid #d8d8d8; border-right: 1px solid #d4d4d4; }
.grp { display: flex; height: 100%; }
.g-clip { width: 75px; border-right: 1px solid #d4d4d4; display: grid; grid-template-columns: 27px 27px; grid-auto-rows: 33px; padding: 12px 0 0 9px; justify-items: center; align-items: center; align-content: start; height: 90px; }
.cb { width: 18px; height: 22px; display: block; }
.paste { display: flex; align-items: center; gap: 3px; margin-left: 8px; }
.paste .cb { width: 18px; }
.g2 { padding-left: 7px; width: 224px; }
.g3 { padding-left: 10px; width: 215px; }
.g4 { padding-left: 6px; width: 158px; }
.g5 { padding-left: 9px; width: 264px; }
.g6 { padding-left: 6px; width: 107px; }
.g7 { width: 87px; flex-direction: column; padding: 7px 0 0 12px; }
.sep { width: 1px; height: 75px; margin-top: 8px; background: #d4d4d4; flex: none; }
.sep-full { height: 90px; margin-top: 0; }
.rb { display: flex; flex-direction: column; align-items: center; padding-top: 13px; color: #222; }
.rb span { line-height: 16px; margin-top: 3px; white-space: nowrap; }
.rb .caret { margin-top: 11px; }
.rb.off { color: #999; }
.w50 { width: 50px; } .w58 { width: 58px; }
.ri { width: 36px; height: 32px; display: block; }
.gray { color: #9b9b9b; }
.numtxt { fill: #fff; font-size: 8px; font-weight: bold; font-family: "Liberation Sans", sans-serif; }
.spinrow { display: flex; align-items: center; height: 25px; }
.sp { width: 17px; height: 18px; }
.spin { margin-left: 10px; width: 38px; height: 21px; border: 1px solid #bbb; display: flex; align-items: center; justify-content: space-between; padding: 0 6px 0 3px; }
.spin b { font-weight: normal; font-size: 13px; color: #333; }
.arr { display: flex; flex-direction: column; gap: 5px; }
.up { border-left: 3px solid transparent; border-right: 3px solid transparent; border-bottom: 3px solid #777; width: 0; height: 0; }
.dn { border-left: 3px solid transparent; border-right: 3px solid transparent; border-top: 3px solid #777; width: 0; height: 0; }
.reset { display: flex; align-items: center; margin-top: 3px; font-size: 13px; color: #222; }
.rst { width: 14px; height: 14px; margin: 0 5px 0 1px; }

/* main */
.main { flex: none; height: 904px; display: flex; position: relative; }
.left { width: 1568px; display: flex; flex-direction: column; }
.doctabs { height: 24px; flex: none; padding-top: 1px; box-shadow: 0 1px 0 #e6e6e6; position: relative; z-index: 1; }
.doctab { width: 82px; height: 23px; background: #bcc1cd; display: flex; align-items: center; padding-left: 7px; }
.docico { width: 16px; height: 18px; }
.docname { margin-left: 3px; font-size: 13px; color: #444; }
.docx { margin-left: 9px; font-size: 17px; line-height: 17px; color: #555; }
.work { flex: none; height: 849px; display: flex; }
.canvas { width: 1551px; height: 849px; overflow: hidden; border-bottom: 1px solid #bbb; }
.map { display: block; }
.ln path, .ln2 path, .ln3 path { fill: none; }
.ln path { stroke: #4a8ab5; stroke-width: 1.2; }
.ln2 path { stroke: #a8c8de; stroke-width: 1.5; }
.ln3 path { stroke: #4788b4; stroke-width: 2.5; }
.root { fill: #f5f9fd; stroke: #3f84b4; stroke-width: 1.2; }
.roottxt { font-size: 14px; fill: #222; letter-spacing: -.2px; }
.t { transform: translateY(1px); }
.t text { font-size: 11px; fill: #3a3a3a; white-space: pre; }
.t text.bold { font-weight: bold; fill: #222; }

.vscroll { width: 17px; background: #ebebeb; display: flex; flex-direction: column; }
.sbtn { width: 17px; height: 17px; flex: none; background: #fff; border: 1px solid #bbb; display: flex; align-items: center; justify-content: center; }
.vgap1 { height: 656px; }
.vthumb { height: 49px; background: #fff; border: 1px solid #bbb; }
.vgap2 { flex: 1; }
.tri { width: 0; height: 0; }
.tri-up { border-left: 4px solid transparent; border-right: 4px solid transparent; border-bottom: 5px solid #666; }
.tri-dn { border-left: 4px solid transparent; border-right: 4px solid transparent; border-top: 5px solid #666; }
.tri-l { border-top: 4px solid transparent; border-bottom: 4px solid transparent; border-right: 5px solid #666; }
.tri-r { border-top: 4px solid transparent; border-bottom: 4px solid transparent; border-left: 5px solid #666; }
.hscroll { flex: none; width: 1551px; height: 17px; background: #ebebeb; display: flex; }
.hgap1 { width: 422px; }
.hthumb { width: 954px; height: 17px; background: #fff; border: 1px solid #bbb; }
.hgap2 { flex: 1; }

.colors { flex: none; height: 14px; display: flex; align-items: flex-start; }
.cl-label { width: 27px; padding-left: 1px; line-height: 16px; color: #222; }
.swatches { display: flex; width: 1350px; }
.swatches i, .recent i { width: 15px; height: 13px; border-right: 1px solid #fff; }
.cl-recent { margin-left: 4px; width: 27px; line-height: 16px; color: #222; }
.recent { display: flex; }
.palette { width: 12px; height: 14px; margin-left: 9px; }
.s1{background:#b10318}.s2{background:#d80b1e}.s3{background:#c85079}.s4{background:#ec5565}.s5{background:#ee7078}.s6{background:#e85f9c}.s7{background:#e29ab5}.s8{background:#f08f8a}.s9{background:#f093a0}.s10{background:#ffa273}.s11{background:#f2ac95}.s12{background:#f8bcba}.s13{background:#e8d4e6}.s14{background:#fcd3e2}.s15{background:#fddfe5}
.s16{background:#13275b}.s17{background:#223a70}.s18{background:#432f7c}.s19{background:#0c4e96}.s20{background:#0469a8}.s21{background:#4264ae}.s22{background:#5585c4}.s23{background:#0a7fcf}.s24{background:#0792ce}.s25{background:#2fabe3}.s26{background:#03b4ee}.s27{background:#34c5f6}.s28{background:#8bc3ea}.s29{background:#a2d8ef}.s30{background:#cfe9f4}
.s31{background:#044138}.s32{background:#06553a}.s33{background:#006666}.s34{background:#5b6b30}.s35{background:#047a4a}.s36{background:#22963f}.s37{background:#03aa9c}.s38{background:#54bbc0}.s39{background:#1dcfb0}.s40{background:#4cbb7d}.s41{background:#00b050}.s42{background:#80bc0f}.s43{background:#a7d266}.s44{background:#c0db45}.s45{background:#cfe8c8}
.s46{background:#e85322}.s47{background:#f06a00}.s48{background:#f48400}.s49{background:#f69d55}.s50{background:#f4a700}.s51{background:#ffb000}.s52{background:#ffb733}.s53{background:#fdcc30}.s54{background:#ffdb00}.s55{background:#fff000}.s56{background:#fff27c}.s57{background:#ffd26f}.s58{background:#ebcf9d}.s59{background:#ffdeae}.s60{background:#fce8d2}
.s61{background:#7a2f73}.s62{background:#844087}.s63{background:#67439a}.s64{background:#775698}.s65{background:#9a6aa0}.s66{background:#9f5b8b}.s67{background:#c77fb1}.s68{background:#ab96cf}.s69{background:#c4a4c9}.s70{background:#edc4dd}
.s71{background:#5c2a1b}.s72{background:#773d30}.s73{background:#924f2c}.s74{background:#ab5829}.s75{background:#c27c42}.s76{background:#b48a6c}.s77{background:#e0b98a}.s78{background:#d8cfc7}.s79{background:#cdd5cc}
.s80{background:#000}.s81{background:#403b3a}.s82{background:#5a5a5a}.s83{background:#727272}.s84{background:#8c8c8c}.s85{background:#9ea0a0}.s86{background:#b0b2b1}.s87{background:#cdd0cf}.s88{background:#dcdcdc}.s89{background:#eee}.s90{background:#fff}
.r1 { background: #c7a5cc; }
.r2 { background: #76559a; }

/* right panel */
.panel { position: relative; width: 352px; display: flex; flex-direction: column; }
.p-head { flex: none; height: 24px; display: flex; align-items: center; justify-content: space-between; padding: 0 10px 0 9px; font-size: 15px; color: #333; }
.pin { width: 8px; height: 12px; }
.p-body { flex: 1; display: flex; }
.strip { width: 37px; margin-top: 16px; border-right: 1px solid #c8c8c8; padding-left: 4px; }
.st { width: 30px; height: 30px; margin-bottom: 20px; display: flex; align-items: center; justify-content: center; }
.st-on { background: #bcc1cd; }
.sti { width: 22px; height: 22px; display: block; color: #5c6479; }
.sti.tall { height: 26px; }
.pf { flex: 1; padding-left: 7px; display: flex; flex-direction: column; align-items: flex-start; }
.row { display: grid; align-items: center; }
.pi { display: flex; align-items: center; gap: 4px; }
.r1col { margin: 23px 0 0 19px; grid-template-columns: 73px 73px 73px 73px; }
.i36 { width: 36px; height: 35px; display: block; }
.dash { margin-top: 14px; width: 292px; border-top: 1px dashed #aaa; }
.lbl { font-size: 12px; line-height: 16px; color: #333; font-weight: bold; }
.l-bg { margin-top: 27px; }
.r2col { margin: 12px 0 0 17px; grid-template-columns: 75px 77px 71px 73px; }
.i2 { height: 23px; width: 32px; display: block; }
.l-zt { margin-top: 45px; }
.r3col { margin: 11px 0 0 19px; grid-template-columns: 73px 74px 60px; }
.i3 { width: 28px; height: 27px; display: block; }
.i3b { width: 30px; height: 26px; display: block; }
.aa { font-size: 30px; line-height: 27px; color: #5c6479; letter-spacing: -1px; width: 30px; white-space: nowrap; }
.bigA { font-family: "Liberation Serif", serif; font-size: 18px; font-weight: bold; fill: #fff; }
.l-rb { margin-top: 41px; }
.optbox { margin: 7px 0 0 13px; height: 36px; border: 1px solid #e3e3e3; padding: 1px; display: flex; gap: 2px; }
.ob-rb { width: 219px; }
.ob-xg { width: 111px; }
.opt { width: 52px; height: 32px; display: flex; align-items: center; justify-content: center; }
.opt-on { background: #bcc1cd; }
.cells { display: grid; grid-template-columns: 15px 15px; grid-auto-rows: 9px; gap: 1px 2px; }
.c-d { background: #5c6479; }
.c-m { background: #6e7691; }
.c-m2 { background: #7e87a3; }
.c-l { background: #8a94b5; }
.l-xg { margin-top: 39px; }
.fx { width: 32px; height: 28px; display: block; }
.winmark { position: absolute; left: 63px; top: 839px; color: #c8c8c8; line-height: 1; }
.wm1 { font-size: 21px; }
.wm2 { font-size: 15px; margin-top: 6px; }

/* status */
.status { position: relative; flex: none; height: 29px; background: #5c6479; display: flex; align-items: center; padding-top: 1px; }
.link { margin-left: 5px; font-size: 13.2px; color: #eef1f8; text-decoration: underline; }
.st-right { margin-left: auto; display: flex; align-items: center; padding-right: 14px; }
.si { width: 15px; height: 17px; display: block; }
.si2 { margin-left: 15px; }
.slider { position: relative; width: 108px; height: 1px; background: #e6e8ee; margin-left: 20px; }
.thumb { position: absolute; left: 29px; top: -6px; width: 6px; height: 13px; background: #fff; }
.pct { margin-left: 19px; font-size: 11px; color: #e6e8ee; }
.si3 { width: 14px; height: 14px; margin-left: 24px; }
.si4 { width: 14px; height: 14px; margin-left: 16px; }
.csdn { position: absolute; left: 1639px; top: 5px; font-size: 16px; color: rgba(255, 255, 255, .7); white-space: nowrap; }
.under { flex: none; height: 2px; background: #dde1ea; }
```
